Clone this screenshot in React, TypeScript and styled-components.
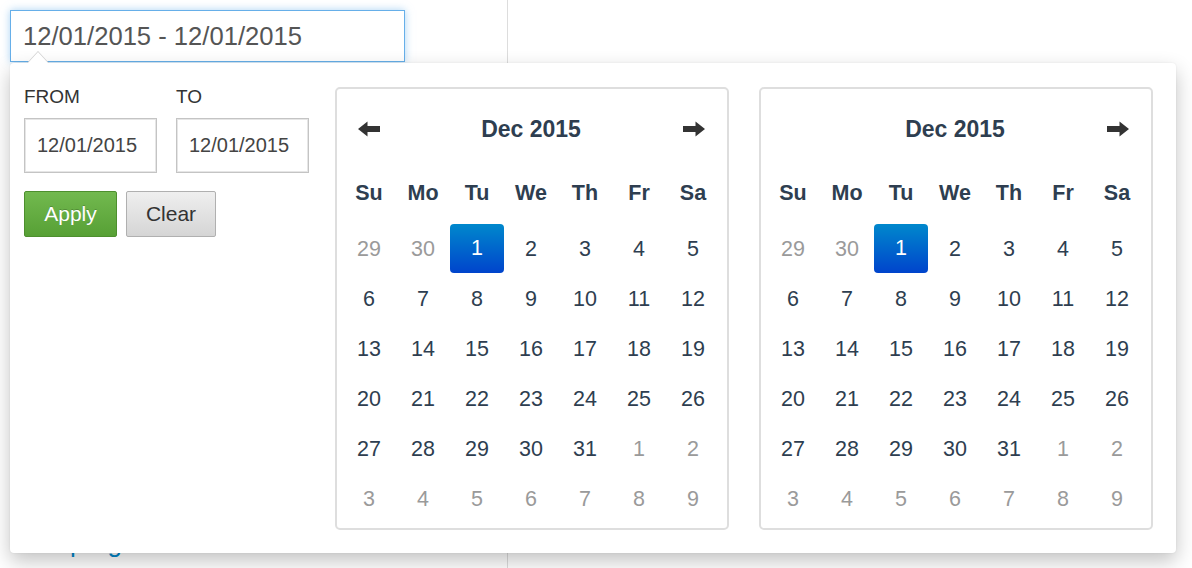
import React from "react"
import styled, { createGlobalStyle, css } from "styled-components"

const GlobalStyle = createGlobalStyle`
    html, body {
        margin: 0;
        padding: 0;
        background: #ffffff;
        font-family: "Liberation Sans", Arial, Helvetica, sans-serif;
    }
    * { box-sizing: border-box; }
`

const TEXT_DARK = "#2e3e50"
const TEXT_MUTED = "#9a9a9a"

const Page = styled.div`
    position: relative;
    display: grid;
    grid-template-columns: 507px 1fr;
    width: 1192px;
    height: 568px;
    overflow: hidden;
`

const LeftCol = styled.div`
    display: flex;
    flex-direction: column;
    padding: 10px 0 0 10px;
`

const RightCol = styled.div`
    border-left: 1px solid #dddddd;
`

const RangeInput = styled.div`
    width: 395px;
    height: 52px;
    display: flex;
    align-items: center;
    padding: 0 12px;
    border: 1px solid #66afe9;
    box-shadow: 0 0 8px rgba(102, 175, 233, 0.55);
    font-size: 25.6px;
    color: #555555;
`

const PageLink = styled.a`
    margin-top: auto;
    margin-bottom: 10px;
    padding-left: 8px;
    font-size: 26px;
    line-height: 30px;
    color: #0088cc;
    text-decoration: none;
`

const Popup = styled.div`
    position: absolute;
    top: 63px;
    left: 10px;
    width: 1166px;
    height: 490px;
    display: flex;
    gap: 30px;
    padding: 24px 23px 23px 14px;
    background: #ffffff;
    border-radius: 4px;
    box-shadow: 0 8px 20px rgba(0, 0, 0, 0.24), 0 0 2px rgba(0, 0, 0, 0.08);
    z-index: 10;

    &::before,
    &::after {
        content: "";
        position: absolute;
        left: 17px;
        border-left: 11px solid transparent;
        border-right: 11px solid transparent;
    }
    &::before {
        top: -12px;
        border-bottom: 12px solid #cfcfcf;
    }
    &::after {
        top: -11px;
        border-bottom: 12px solid #ffffff;
    }
`

const RangeForm = styled.div`
    width: 285px;
    margin-right: -4px;
    display: flex;
    flex-direction: column;
`

const FieldRow = styled.div`
    display: flex;
    gap: 19px;
`

const Field = styled.div`
    display: flex;
    flex-direction: column;
    width: 133px;
`

const FieldLabel = styled.label`
    font-size: 19px;
    line-height: 20px;
    color: #333333;
    margin-bottom: 11px;
`

const FieldInput = styled.div`
    height: 55px;
    display: flex;
    align-items: center;
    padding-left: 12px;
    border: 1px solid #c4c4c4;
    box-shadow: inset 0 0 0 1px #e6e6e6;
    font-size: 20px;
    color: #444444;
`

const ButtonRow = styled.div`
    display: flex;
    gap: 9px;
    margin-top: 18px;
`

const Button = styled.button<{ $primary?: boolean }>`
    height: 46px;
    padding: 0;
    font-family: inherit;
    font-size: 21px;
    border-radius: 2px;
    cursor: pointer;
    ${(p) =>
        p.$primary
            ? css`
                  width: 93px;
                  color: #ffffff;
                  background: linear-gradient(#72b94f, #57a035);
                  border: 1px solid #4d8f2e;
                  text-shadow: 0 -1px 0 rgba(0, 0, 0, 0.2);
              `
            : css`
                  width: 90px;
                  color: #333333;
                  background: linear-gradient(#efefef, #d5d5d5);
                  border: 1px solid #b0b0b0;
              `}
`

const CalendarBox = styled.div`
    width: 394px;
    height: 443px;
    padding: 0 7px 0 5px;
    border: 2px solid #dedede;
    border-radius: 5px;
`

const Grid = styled.div`
    display: grid;
    grid-template-columns: repeat(7, 54px);
`

const HeaderRow = styled(Grid)`
    height: 80px;
    align-items: center;
    justify-items: center;
`

const MonthTitle = styled.div`
    grid-column: 2 / span 5;
    font-size: 23px;
    font-weight: 700;
    color: ${TEXT_DARK};
`

const NavArrow = styled.svg<{ $col: number }>`
    grid-column: ${(p) => p.$col};
    width: 23px;
    height: 16px;
    fill: #333333;
`

const WeekRow = styled(Grid)`
    height: 46px;
    margin-top: 1px;
    margin-bottom: 8px;
    align-items: center;
    justify-items: center;
    font-size: 21.5px;
    font-weight: 700;
    color: ${TEXT_DARK};
`

const DaysGrid = styled(Grid)`
    grid-auto-rows: 50px;
`

const Day = styled.div<{ $muted?: boolean; $active?: boolean }>`
    display: flex;
    align-items: center;
    justify-content: center;
    font-size: 21.5px;
    color: ${(p) => (p.$muted ? TEXT_MUTED : TEXT_DARK)};
    ${(p) =>
        p.$active &&
        css`
            margin: 0 0 1px 0;
            color: #ffffff;
            border-radius: 4px;
            background: linear-gradient(#0088cc, #0044cc);
        `}
`

const WEEKDAYS = ["Su", "Mo", "Tu", "We", "Th", "Fr", "Sa"]

// Dec 2015: starts on Tuesday, 6 rows
const buildDays = () => {
    const days: { n: number; muted: boolean }[] = []
    days.push({ n: 29, muted: true }, { n: 30, muted: true })
    for (let i = 1; i <= 31; i++) days.push({ n: i, muted: false })
    let next = 1
    while (days.length < 42) days.push({ n: next++, muted: true })
    return days
}

const LeftArrow = () => (
    <NavArrow $col={1} viewBox="0 0 23 16">
        <path d="M0 8 L9.5 0.5 L9.5 5 L22 5 L22 11 L9.5 11 L9.5 15.5 Z" />
    </NavArrow>
)

const RightArrow = () => (
    <NavArrow $col={7} viewBox="0 0 23 16">
        <path d="M23 8 L13.5 0.5 L13.5 5 L1 5 L1 11 L13.5 11 L13.5 15.5 Z" />
    </NavArrow>
)

const Calendar = ({ showPrev }: { showPrev: boolean }) => {
    const days = buildDays()
    return (
        <CalendarBox>
            <HeaderRow>
                {showPrev && <LeftArrow />}
                <MonthTitle>Dec 2015</MonthTitle>
                <RightArrow />
            </HeaderRow>
            <WeekRow>
                {WEEKDAYS.map((d) => (
                    <span key={d}>{d}</span>
                ))}
            </WeekRow>
            <DaysGrid>
                {days.map((d, i) => (
                    <Day key={i} $muted={d.muted} $active={!d.muted && d.n === 1}>
                        {d.n}
                    </Day>
                ))}
            </DaysGrid>
        </CalendarBox>
    )
}

const App = () => {
    return (
        <>
            <GlobalStyle />
            <Page>
                <LeftCol>
                    <RangeInput>12/01/2015 - 12/01/2015</RangeInput>
                    <PageLink href="#">Edit program</PageLink>
                </LeftCol>
                <RightCol />
                <Popup>
                    <RangeForm>
                        <FieldRow>
                            <Field>
                                <FieldLabel>FROM</FieldLabel>
                                <FieldInput>12/01/2015</FieldInput>
                            </Field>
                            <Field>
                                <FieldLabel>TO</FieldLabel>
                                <FieldInput>12/01/2015</FieldInput>
                            </Field>
                        </FieldRow>
                        <ButtonRow>
                            <Button $primary>Apply</Button>
                            <Button>Clear</Button>
                        </ButtonRow>
                    </RangeForm>
                    <Calendar showPrev />
                    <Calendar showPrev={false} />
                </Popup>
            </Page>
        </>
    )
}

export default App
